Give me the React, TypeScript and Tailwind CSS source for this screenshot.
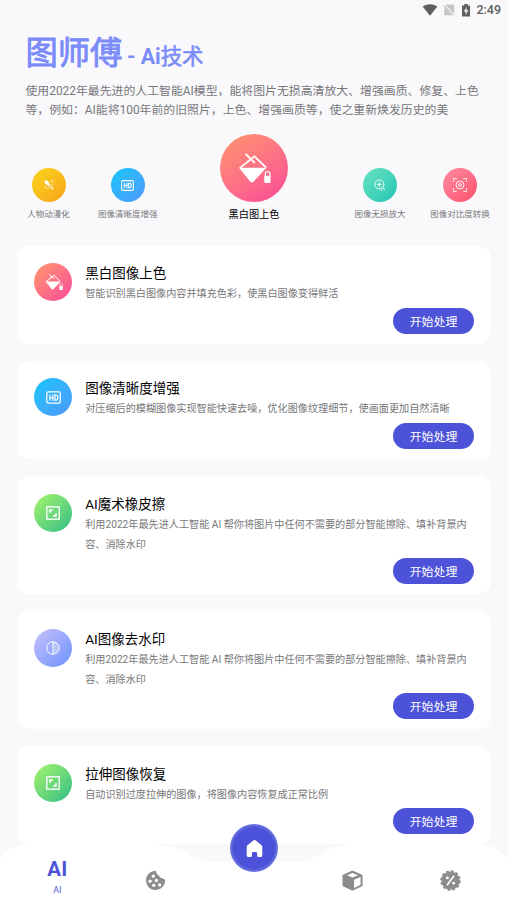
import React from "react";

type Kind = "paint" | "hd" | "expand" | "contrast" | "wand" | "zoom" | "focus";

function Glyph({ kind, className }: { kind: Kind; className: string }) {
  const common = { viewBox: "0 0 24 24", fill: "none", stroke: "white", className };
  switch (kind) {
    case "paint":
      return (
        <svg {...common} strokeWidth={1.3}>
          <path d="m5.5 1.4 6.8 6.5M6.6 7.2 12 3.2l8.5 8.2M10 4.8 1.2 11.7" />
          <path d="M.7 11.4h20L11.2 21.6Q10.2 22.6 9 21.6z" fill="white" stroke="none" />
          <path d="M19.9 17.6v-2.2q0-.9.9-.9h1.5q.9 0 .9.9v2.2" strokeWidth={0.9} />
          <rect x="19.1" y="17.2" width="4.6" height="5.3" rx="0.6" fill="white" stroke="none" />
        </svg>
      );
    case "hd":
      return (
        <svg {...common} strokeWidth={2}>
          <rect x="1.2" y="3" width="21.6" height="18" rx="2.5" />
          <path d="M6.2 7v10M11 7v10M6.2 12H11M14.2 7.7h1.8q2.8 0 2.8 3v2.6q0 3-2.8 3h-1.8z" />
        </svg>
      );
    case "expand":
      return (
        <svg {...common} strokeWidth={2.3}>
          <rect x="1.4" y="1.4" width="21.2" height="21.2" />
          <path d="M6.9 11.5V6.9H11.5M17.1 12.5v4.6H12.5" strokeWidth={3} />
        </svg>
      );
    case "contrast":
      return (
        <svg {...common} strokeWidth={1.6}>
          <circle cx="12" cy="12" r="10.7" />
          <path d="M12 1.3v21.4M12 7.5l5-5M12 13l8.3-8.3M12 18.3 22.3 8M13 22 22.5 12.5" />
        </svg>
      );
    case "wand":
      return (
        <svg {...common} strokeWidth={2.4}>
          <path d="m9 6 13 13-3 3L6 9z" />
          <path d="m2 2 7 1 3 8-8-2z" fill="white" />
          <path d="M16 4h3M21 1v3M3 15v5M8 20h3M20 10h3" />
        </svg>
      );
    case "zoom":
      return (
        <svg {...common} strokeWidth={1.9}>
          <circle cx="10.8" cy="10.8" r="9" />
          <path d="M6 10.8h9.6M10.8 6v9.6M17 17.3l5 4.7M14 22h3" />
        </svg>
      );
    case "focus":
      return (
        <svg {...common} strokeWidth={1.5}>
          <path d="M1 6.5V1h5.5M17.5 1H23v5.5M23 17.5V23h-5.5M6.5 23H1v-5.5" />
          <circle cx="12" cy="12" r="6.8" />
          <circle cx="12" cy="12" r="2.3" />
        </svg>
      );
  }
}

const shortcuts: { kind: Kind; label: string; fill: string; box: string; icon: string }[] = [
  { kind: "wand", label: "人物动漫化", fill: "from-[#fad51b] to-[#f5a41b]", box: "w-[80px] ml-[8.5px]", icon: "size-[10px]" },
  { kind: "hd", label: "图像清晰度增强", fill: "from-[#04c6fa] to-[#4b98fb]", box: "w-[78.5px]", icon: "size-[13px]" },
  { kind: "zoom", label: "图像无损放大", fill: "from-[#66e3c0] to-[#17c5b4]", box: "w-[80px] ml-[173px]", icon: "size-[12px]" },
  { kind: "focus", label: "图像对比度转换", fill: "from-[#fd8ba4] to-[#fb4e69]", box: "w-[80px]", icon: "size-[14px]" },
];

const cards: { kind: Kind; title: string; text: string; fill: string; box: string; icon: string }[] = [
  { kind: "paint", title: "黑白图像上色", text: "智能识别黑白图像内容并填充色彩，使黑白图像变得鲜活", fill: "from-[#fe9569] to-[#fa4698]", box: "h-[98px] pt-[17px]", icon: "size-[18px] translate-x-px" },
  { kind: "hd", title: "图像清晰度增强", text: "对压缩后的模糊图像实现智能快速去噪，优化图像纹理细节，使画面更加自然清晰", fill: "from-[#04c6fa] to-[#4b98fb]", box: "h-[98px] pt-[17px]", icon: "size-[15px]" },
  { kind: "expand", title: "AI魔术橡皮擦", text: "利用2022年最先进人工智能 AI 帮你将图片中任何不需要的部分智能擦除、填补背景内容、消除水印", fill: "from-[#a3f569] to-[#23bd84]", box: "h-[118px] pt-[17.5px]", icon: "size-[14px]" },
  { kind: "contrast", title: "AI图像去水印", text: "利用2022年最先进人工智能 AI 帮你将图片中任何不需要的部分智能擦除、填补背景内容、消除水印", fill: "from-[#c6c0fa] to-[#6e92fd]", box: "h-[118px] pt-[17.5px]", icon: "size-[14px]" },
  { kind: "expand", title: "拉伸图像恢复", text: "自动识别过度拉伸的图像，将图像内容恢复成正常比例", fill: "from-[#a3f569] to-[#23bd84]", box: "h-[98px] pt-[17.5px]", icon: "size-[14px]" },
];

function StatusBar() {
  return (
    <div className="flex h-5 items-center justify-end pr-[7px] text-[#5f5f61]">
      <svg viewBox="0 0 16 12" className="mr-[5px] h-[12px] w-[16px]" fill="currentColor">
        <path d="M.6 2.6Q8-2.2 15.4 2.6L8 11.7z" />
      </svg>
      <svg viewBox="0 0 12 12" className="mr-[6px] size-[12px]">
        <path d="M4 .5h7.2v10.8H1.3V3.2z" fill="#c4c4c6" />
        <path d="m.7.8 10.5 10.7" stroke="#f9f9fc" strokeWidth="2.4" />
        <path d="m.5 1 10.3 10.4" stroke="#aaaaac" />
      </svg>
      <svg viewBox="0 0 10 13" className="mr-[5px] h-[13px] w-[10px]">
        <path d="M3.3 0h3.4v1.5H9v11H1v-11h2.3z" fill="currentColor" />
        <path d="M5.6 3 2.8 7.5h2L4.5 11l2.9-4.7h-2z" fill="#f9f9fc" />
      </svg>
      <span className="pt-px text-[12.5px] leading-none font-medium">2:49</span>
    </div>
  );
}

function NavBar() {
  return (
    <nav className="absolute inset-x-0 bottom-0 h-[84px]">
      <svg viewBox="0 0 508 60" className="absolute bottom-0 left-0 h-[60px] w-full" fill="white">
        <path d="M0 60V15C6 5 14 0 30 0H145C172 0 182 7 193 13Q200 17.5 212 17.5H296Q307 17.5 314 13C326 6 338 0 362 0H478Q500 1 508 18V60Z" />
      </svg>
      <div className="relative flex h-full pt-[43px] text-[#8c8c8c]">
        <div className="ml-[8.5px] w-[97.5px] text-center text-[#4d53d9]">
          <div className="text-[20.5px] leading-[13px] font-bold">AI</div>
          <div className="mt-[9px] text-[8.8px] leading-[11px]">AI</div>
        </div>
        <svg viewBox="0 0 24 24" className="mt-[7px] ml-[39px] size-[21px]">
          <path d="M12.5 1C13 3 13.5 4 14 5q2 .5 2.5 2.5T20 9.5q1 1 3 1.5A11 11 0 1 1 12.5 1Z" fill="currentColor" />
          <g fill="white">
            <circle cx="9.5" cy="7" r="1.9" />
            <circle cx="5.8" cy="12.8" r="1.9" />
            <circle cx="13" cy="12" r="1.9" />
            <circle cx="10" cy="17.5" r="1.9" />
            <circle cx="16.8" cy="17" r="1.9" />
          </g>
        </svg>
        <svg viewBox="0 0 24 24" className="mt-[7px] ml-[176px] size-[21px]">
          <path d="M12 .6 23.5 5.6V18.3L12 23.6.5 18.3V5.6z" fill="currentColor" />
          <path d="M12 3.4 18.3 6 12 8.7 5.7 6zM13.8 11.2l7.4-3.1v8.7l-7.4 3.7z" fill="white" />
        </svg>
        <svg viewBox="0 0 24 24" className="mt-[7px] ml-[77px] size-[21px]">
          <circle cx="12" cy="12" r="10.4" fill="currentColor" />
          <circle cx="12" cy="12" r="10.8" fill="none" stroke="currentColor" strokeWidth="1.8" strokeDasharray="3.4 2.254" />
          <path d="m8 17.3 8-10.6" stroke="white" strokeWidth="1.9" />
          <circle cx="8.4" cy="9" r="1.7" fill="white" />
          <circle cx="15.6" cy="15" r="1.7" fill="white" />
        </svg>
      </div>
      <div className="absolute top-[4px] left-[230px] flex size-[48px] items-center justify-center rounded-full bg-radial from-[#4b51d8] from-60% to-[#777ddf] to-72%">
        <svg viewBox="0 0 20 20" className="size-[19px]" fill="white">
          <path d="M8.6 1.7Q10 .5 11.4 1.7L17.4 6.6Q18.2 7.3 18.2 8.4V17Q18.2 19 16.5 19H14Q12.8 19 12.8 17.6V15Q12.8 13.6 11.4 13.6H8.7Q7.3 13.6 7.3 15V17.6Q7.3 19 6 19H3.6Q1.8 19 1.8 17V8.4Q1.8 7.3 2.6 6.6Z" />
        </svg>
      </div>
    </nav>
  );
}

export default function App() {
  return (
    <div className="relative h-[904px] w-[508px] overflow-hidden bg-[#f9f9fc] font-[Roboto,'Noto_Sans_CJK_SC',sans-serif]">
      <StatusBar />
      <header className="h-[226px]">
        <h1 className="flex h-[54px] items-baseline pt-[9px] pl-[25.5px] text-[#7b8cfa]">
          <span className="text-[32.3px] leading-[48px] [-webkit-text-stroke:0.9px]">图师傅</span>
          <span className="ml-[4.5px] text-[21.4px] leading-[48px] [-webkit-text-stroke:0.6px]">
            <span className="font-bold [-webkit-text-stroke:0]">- Ai</span>技术
          </span>
        </h1>
        <p className="mt-[8px] pl-[25.5px] text-[11.88px] leading-[18.5px] whitespace-nowrap text-[#777779]">
          使用2022年最先进的人工智能AI模型，能将图片无损高清放大、增强画质、修复、上色
          <br />
          等，例如：AI能将100年前的旧照片，上色、增强画质等，使之重新焕发历史的美
        </p>
        <div className="relative mt-[15px] flex pt-[34px]">
          {shortcuts.map((s) => (
            <div key={s.label} className={`flex shrink-0 flex-col items-center ${s.box}`}>
              <div className={`flex size-[34px] items-center justify-center rounded-full bg-linear-135 ${s.fill}`}>
                <Glyph kind={s.kind} className={s.icon} />
              </div>
              <span className="mt-[6px] text-[8.5px] leading-[13px] whitespace-nowrap text-[#777779]">{s.label}</span>
            </div>
          ))}
          <div className="absolute top-0 left-[204px] flex w-[100px] flex-col items-center">
            <div className="flex size-[68px] items-center justify-center rounded-full bg-linear-145 from-[#fe9569] to-[#fa4698]">
              <Glyph kind="paint" className="size-[33px]" />
            </div>
            <span className="mt-[4px] text-[10.2px] leading-[17px] text-black">黑白图上色</span>
          </div>
        </div>
      </header>
      <main className="flex flex-col gap-[17px] px-[17px]">
        {cards.map((c) => (
          <section key={c.title} className={`flex w-[474px] flex-col rounded-[12px] bg-white px-[17px] pb-[10px] ${c.box}`}>
            <div className="flex">
              <div className={`flex size-[38px] shrink-0 items-center justify-center rounded-full bg-linear-135 ${c.fill}`}>
                <Glyph kind={c.kind} className={c.icon} />
              </div>
              <div className="ml-[13.25px] w-[390px]">
                <h2 className="text-[13.5px] leading-[20px] text-black">{c.title}</h2>
                <p className="mt-px text-[10.15px] leading-[20px] text-[#777779]">{c.text}</p>
              </div>
            </div>
            <button className="mt-auto h-[26px] w-[81px] shrink-0 self-end rounded-full bg-[#4d53d9] pt-[2px] text-[11.9px] leading-[24px] text-white">开始处理</button>
          </section>
        ))}
      </main>
      <NavBar />
    </div>
  );
}
